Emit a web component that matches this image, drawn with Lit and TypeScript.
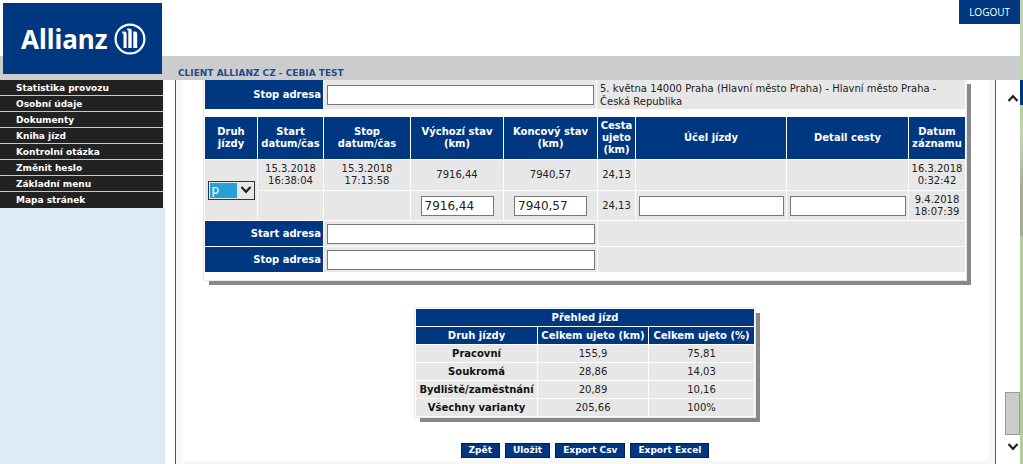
import { LitElement, html, css, svg } from "lit";
import { customElement } from "lit/decorators.js";

const chevron = (up: boolean) => html`<svg viewBox="0 0 12 8" width="12" height="8" aria-hidden="true">
  ${up
    ? svg`<path d="M1.500 7 6 2.200 10.500 7" fill="none" stroke="#222" stroke-width="2.200"/>`
    : svg`<path d="M1.500 1 6 5.800 10.500 1" fill="none" stroke="#222" stroke-width="2.200"/>`}
</svg>`;

@customElement("app-header")
class AppHeader extends LitElement {
  static styles = css`
    :host {
      display: flex;
      height: 80px;
      box-sizing: border-box;
      padding-left: 3px;
      border-right: 3px solid #c3d3b0;
      background: linear-gradient(#fff 56px, #cbcccd 56px);
    }
    .logo {
      display: flex;
      align-items: center;
      gap: 6px;
      box-sizing: border-box;
      width: 159px;
      height: 71px;
      margin-top: 3px;
      padding-left: 18px;
      background: #003781;
      color: #fff;
      font: bold 26px/36px "Noto Sans", sans-serif;
      text-decoration: none;
    }
    .title {
      flex: 1;
      align-self: flex-end;
      margin: 0;
      padding-left: 16px;
      color: #27498c;
      font: bold 9px/14px "DejaVu Sans", sans-serif;
    }
    .logout {
      align-self: flex-start;
      height: 24px;
      padding: 0 10px;
      border: 0;
      background: #003781;
      color: #fff;
      font: 10px/22px "Open Sans", sans-serif;
    }
  `;
  render() {
    return html`
      <a class="logo" href="#">
        <span>Allianz</span>
        <svg viewBox="0 0 32 32" width="32" height="32" aria-hidden="true">
          <circle cx="16" cy="16" r="14.400" fill="none" stroke="#fff" stroke-width="2.200" />
          <path fill="#fff" d="M8.200 8.600h2.600q1.800 0 1.800 1.800V25H9.500V10.600H8.200zM13.200 5.600h2.500q2 0 2 2V25h-3.400V7.600h-1.100zM19.300 25V8.600h1.700q2.200 0 2.200 2.200V25z" />
        </svg>
      </a>
      <h1 class="title">CLIENT ALLIANZ CZ - CEBIA TEST</h1>
      <button class="logout" type="button">LOGOUT</button>
    `;
  }
}

@customElement("side-menu")
class SideMenu extends LitElement {
  static styles = css`
    :host {
      display: block;
      width: 165px;
      flex: none;
      background: #deebf5;
    }
    .list {
      margin: 0;
      padding: 0 2px 0 0;
      list-style: none;
      background: #f3f8fc;
    }
    .link {
      display: block;
      height: 15px;
      padding-left: 16px;
      border-bottom: 1px solid #c8c8c8;
      background: #222;
      color: #fff;
      font: bold 9px/16px "DejaVu Sans", sans-serif;
      text-decoration: none;
    }
    li:last-child .link { border-bottom-color: #222; }
  `;
  private items = [
    "Statistika provozu", "Osobní údaje", "Dokumenty", "Kniha jízd",
    "Kontrolní otázka", "Změnit heslo", "Základní menu", "Mapa stránek",
  ];
  render() {
    return html`<nav><ul class="list">
      ${this.items.map((t) => html`<li><a class="link" href="#">${t}</a></li>`)}
    </ul></nav>`;
  }
}

const tableStyles = css`
  table {
    border-collapse: separate;
    border-spacing: 1px;
    background: #fff;
    font: 10px/12px "DejaVu Sans", sans-serif;
    color: #222;
  }
  th, td {
    padding: 0;
    text-align: center;
    vertical-align: middle;
    background: #e7e7e7;
  }
  th {
    background: #003781;
    color: #fff;
    font-weight: bold;
  }
`;

@customElement("trip-form")
class TripForm extends LitElement {
  static styles = [tableStyles, css`
    :host {
      display: block;
      padding-bottom: 7px;
      background: #fff;
      outline: 1px solid #e4e8f0;
      box-shadow: 5px 5px 0 #888;
    }
    table {
      width: 100%;
      table-layout: fixed;
    }
    .previous { margin-bottom: 6px; }
    .previous tr { height: 29px; }
    .head { height: 42px; }
    .entry { height: 30px; }
    .edit { height: 29px; }
    .address { height: 25px; }
    .name {
      padding-right: 2px;
      text-align: right;
    }
    .note {
      padding: 2px 0 0 3px;
      line-height: 13px;
      text-align: left;
      vertical-align: top;
    }
    input {
      display: block;
      box-sizing: border-box;
      width: calc(100% - 5px);
      height: 20px;
      margin: 0 0 0 3px;
      padding: 1px 3px;
      border: 1px solid #777;
      border-radius: 0;
      background: #fff;
      color: #222;
      font: 12px/16px "DejaVu Sans", sans-serif;
    }
    .km {
      width: 73px;
      margin: 0 auto;
    }
    .kind {
      display: inline-grid;
      align-items: center;
      width: 47px;
      vertical-align: middle;
    }
    .kind > * { grid-area: 1 / 1; }
    .kind svg {
      justify-self: end;
      margin-right: 3px;
      pointer-events: none;
    }
    select {
      appearance: none;
      box-sizing: border-box;
      width: 100%;
      height: 19px;
      padding: 0 0 0 3px;
      border: 1px solid #333;
      border-radius: 0;
      background: linear-gradient(#26a0da, #26a0da) 1px 1px / 27px 15px no-repeat #e7e7e7;
      color: #fff;
      font: 12px/15px "DejaVu Sans", sans-serif;
    }
  `];
  private columns = [52, 65, 86, 92, 93, 37, 150, 121, 56];
  render() {
    return html`
      <table class="previous">
        <colgroup><col width="118"><col width="272"><col width="368"></colgroup>
        <tbody><tr>
          <th class="name" scope="row"><label for="prev-stop">Stop adresa</label></th>
          <td><input id="prev-stop" type="text"></td>
          <td class="note">5. května 14000 Praha (Hlavní město Praha) - Hlavní město Praha - Česká Republika</td>
        </tr></tbody>
      </table>
      <table>
        <colgroup>${this.columns.map((w) => html`<col width=${w}>`)}</colgroup>
        <thead><tr class="head">
          <th>Druh<br>jízdy</th><th>Start<br>datum/čas</th><th>Stop<br>datum/čas</th>
          <th>Výchozí stav<br>(km)</th><th>Koncový stav<br>(km)</th><th>Cesta<br>ujeto<br>(km)</th>
          <th>Účel jízdy</th><th>Detail cesty</th><th>Datum<br>záznamu</th>
        </tr></thead>
        <tbody>
          <tr class="entry">
            <td rowspan="2"><span class="kind">
              <select aria-label="Druh jízdy"><option selected>p</option><option>s</option><option>b</option></select>
              ${chevron(false)}
            </span></td>
            <td>15.3.2018<br>16:38:04</td><td>15.3.2018<br>17:13:58</td>
            <td>7916,44</td><td>7940,57</td><td>24,13</td><td></td><td></td>
            <td>16.3.2018<br>0:32:42</td>
          </tr>
          <tr class="edit">
            <td></td><td></td>
            <td><input class="km" type="text" aria-label="Výchozí stav (km)" value="7916,44"></td>
            <td><input class="km" type="text" aria-label="Koncový stav (km)" value="7940,57"></td>
            <td>24,13</td>
            <td><input type="text" aria-label="Účel jízdy"></td>
            <td><input type="text" aria-label="Detail cesty"></td>
            <td>9.4.2018<br>18:07:39</td>
          </tr>
          ${["Start adresa", "Stop adresa"].map((t, i) => html`<tr class="address">
            <th class="name" colspan="2" scope="row"><label for="addr-${i}">${t}</label></th>
            <td colspan="3"><input id="addr-${i}" type="text"></td>
            <td colspan="4"></td>
          </tr>`)}
        </tbody>
      </table>
    `;
  }
}

@customElement("trip-summary")
class TripSummary extends LitElement {
  static styles = [tableStyles, css`
    :host {
      display: block;
      background: #fff;
      outline: 1px solid #e4e8f0;
      box-shadow: 5px 5px 0 #888;
    }
    tr { height: 17px; }
    tbody th {
      background: #e7e7e7;
      color: #111;
    }
  `];
  private rows = [
    ["Pracovní", "155,9", "75,81"],
    ["Soukromá", "28,86", "14,03"],
    ["Bydliště/zaměstnání", "20,89", "10,16"],
    ["Všechny varianty", "205,66", "100%"],
  ];
  render() {
    return html`<table>
      <colgroup><col width="121"><col width="110"><col width="105"></colgroup>
      <thead>
        <tr><th colspan="3">Přehled jízd</th></tr>
        <tr><th>Druh jízdy</th><th>Celkem ujeto (km)</th><th>Celkem ujeto (%)</th></tr>
      </thead>
      <tbody>${this.rows.map(([n, km, p]) => html`<tr><th scope="row">${n}</th><td>${km}</td><td>${p}</td></tr>`)}</tbody>
    </table>`;
  }
}

@customElement("app-root")
class AppRoot extends LitElement {
  static styles = css`
    :host {
      display: flex;
      flex-direction: column;
      height: 100vh;
      overflow: hidden;
      background: #fff;
    }
    .body {
      display: flex;
      flex: 1;
      min-height: 0;
    }
    .panel {
      display: flex;
      flex-direction: column;
      flex: 1;
      min-width: 0;
      overflow: hidden;
      box-sizing: border-box;
      margin: 0 9px 0 10px;
      padding: 0 6px;
      border: solid #2f5f96;
      border-width: 0 1px;
      background: #f5f8fb;
    }
    .sheet {
      display: flex;
      flex-direction: column;
      align-items: center;
      margin-top: -1px;
      padding: 0 23px 3px 22px;
      background: #fff;
    }
    .form { align-self: stretch; }
    .summary { margin: 28px 0 26px; }
    .actions {
      display: flex;
      gap: 5px;
    }
    .action {
      height: 15px;
      padding: 0 7px;
      border: 1px solid #001f50;
      background: #003781;
      color: #fff;
      font: bold 9px/13px "DejaVu Sans", sans-serif;
    }
    .scroll {
      display: flex;
      flex-direction: column;
      align-items: center;
      box-sizing: border-box;
      width: 15px;
      padding: 12px 0 11px;
      background: #fff;
    }
    .arrow {
      display: flex;
      padding: 2px;
      border: 0;
      background: none;
    }
    .track {
      display: flex;
      flex: 1;
      flex-direction: column;
      justify-content: flex-end;
      align-self: stretch;
      padding-bottom: 6px;
    }
    .thumb {
      height: 41px;
      border: 1px solid #999;
      background: #cbcbcb;
    }
    .edge {
      width: 3px;
      background: linear-gradient(#003781 25px, #b5cc9a 25px, #c5d4b4 56px, #a3ae90 110px, #a3ae90 156px, #b5cc9a 157px);
    }
  `;
  render() {
    return html`
      <app-header></app-header>
      <div class="body">
        <side-menu></side-menu>
        <main class="panel">
          <div class="sheet">
            <trip-form class="form"></trip-form>
            <trip-summary class="summary"></trip-summary>
            <div class="actions">
              ${["Zpět", "Uložit", "Export Csv", "Export Excel"].map(
                (t) => html`<button class="action" type="button">${t}</button>`)}
            </div>
          </div>
        </main>
        <div class="scroll">
          <button class="arrow" type="button" aria-label="Nahoru">${chevron(true)}</button>
          <div class="track"><div class="thumb"></div></div>
          <button class="arrow" type="button" aria-label="Dolů">${chevron(false)}</button>
        </div>
        <div class="edge"></div>
      </div>
    `;
  }
}
